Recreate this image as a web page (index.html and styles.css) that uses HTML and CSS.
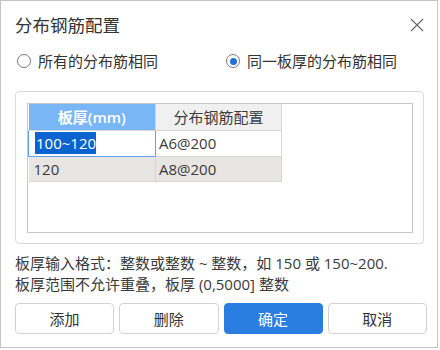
FILE: index.html
```html
<!DOCTYPE html>
<html lang="zh-CN">
<head>
<meta charset="utf-8">
<title>分布钢筋配置</title>
<link rel="stylesheet" href="styles.css">
</head>
<body>
<div class="dialog">
  <div class="titlebar">
    <span class="title">分布钢筋配置</span>
    <svg class="close" width="14" height="14" viewBox="0 0 14 14"><path d="M1 1 L13 13 M13 1 L1 13" stroke="#6b6b6b" stroke-width="1.2" fill="none"/></svg>
  </div>
  <div class="radios">
    <label class="radio"><span class="dot"></span>所有的分布筋相同</label>
    <label class="radio checked"><span class="dot"></span>同一板厚的分布筋相同</label>
  </div>
  <div class="group">
    <div class="frame">
      <table class="grid">
        <tr class="head">
          <th class="sel-head">板厚(mm)</th>
          <th>分布钢筋配置</th>
        </tr>
        <tr class="row">
          <td class="editing"><span class="selected">100~120</span></td>
          <td>A6@200</td>
        </tr>
        <tr class="row alt">
          <td>120</td>
          <td>A8@200</td>
        </tr>
      </table>
    </div>
  </div>
  <p class="hint">板厚输入格式：整数或整数 ~ 整数，如 150 或 150~200.<br>板厚范围不允许重叠，板厚 (0,5000] 整数</p>
  <div class="buttons">
    <button class="btn">添加</button>
    <button class="btn">删除</button>
    <button class="btn primary">确定</button>
    <button class="btn">取消</button>
  </div>
</div>
</body>
</html>
```

FILE: styles.css
```css
html, body {
  margin: 0;
  padding: 0;
  background: #ffffff;
}
body {
  font-family: "Open Sans", "Noto Sans CJK SC", sans-serif;
  color: #333333;
}
.dialog {
  width: 438px;
  height: 348px;
  box-sizing: border-box;
  border: 1px solid #c4c4c4;
  background: #ffffff;
  padding: 0 10px 0 14px;
  display: flex;
  flex-direction: column;
}
.titlebar {
  height: 48px;
  display: flex;
  align-items: center;
  justify-content: space-between;
}
.title {
  font-size: 17.5px;
  line-height: 24px;
  color: #333;
}
.close {
  margin-right: 3px;
}
.radios {
  height: 24px;
  display: flex;
  align-items: center;
}
.radio {
  display: flex;
  align-items: center;
  font-size: 15px;
  line-height: 20px;
  color: #333;
}
.radio:first-child {
  width: 209px;
  padding-left: 2px;
}
.dot {
  width: 14px;
  height: 14px;
  box-sizing: border-box;
  border: 1px solid #7a7a7a;
  border-radius: 50%;
  margin-right: 7px;
  display: flex;
  align-items: center;
  justify-content: center;
}
.checked .dot::after {
  content: "";
  width: 7px;
  height: 7px;
  border-radius: 50%;
  background: #1e6fe0;
}
.group {
  margin-top: 18px;
  width: 409px;
  height: 153px;
  box-sizing: border-box;
  border: 1px solid #dadada;
  border-radius: 4px;
  padding: 11px 0 0 11px;
}
.frame {
  width: 386px;
  height: 130px;
  box-sizing: border-box;
  border: 1px solid #c9c9c9;
}
.grid {
  border-collapse: collapse;
  table-layout: fixed;
  font-size: 15px;
}
.grid th, .grid td {
  padding: 0;
  border: 1px solid #d6d6d6;
  box-sizing: border-box;
  white-space: nowrap;
}
.grid tr:first-child th {
  border-top: none;
}
.grid th:first-child, .grid td:first-child {
  border-left: none;
  width: 127px;
}
.grid th:last-child, .grid td:last-child {
  width: 126px;
}
.head th {
  height: 26px;
  font-weight: normal;
  background: #f0f0f0;
  color: #3c3c3c;
  text-align: center;
  line-height: 24px;
}
.head th.sel-head {
  background: #79b6f5;
  color: #ffffff;
  font-weight: 600;
}
.row td {
  height: 26px;
  line-height: 24px;
  padding-left: 3px;
  color: #3a3a3a;
}
.row.alt td {
  height: 25px;
  background: #e8e6e3;
}
.row td.editing {
  border: 1px solid #5ea3ee;
  padding-left: 6px;
}
.row.alt td:first-child {
  padding-left: 5px;
}
.selected {
  background: #0a64d0;
  color: #ffffff;
  padding: 1px 0 1px 1px;
}
.hint {
  margin: 9px 0 0 0;
  font-size: 15px;
  line-height: 21px;
  color: #3a3a3a;
}
.buttons {
  margin-top: 8px;
  width: 412px;
  display: grid;
  grid-template-columns: repeat(4, 1fr);
  gap: 5px;
}
.btn {
  height: 31px;
  box-sizing: border-box;
  border: 1px solid #d2d2d2;
  border-radius: 4px;
  background: #ffffff;
  font-family: "Open Sans", "Noto Sans CJK SC", sans-serif;
  font-size: 15px;
  color: #333;
  padding: 0;
}
.btn.primary {
  background: #2a7ee1;
  border-color: #2a7ee1;
  color: #ffffff;
}
```
